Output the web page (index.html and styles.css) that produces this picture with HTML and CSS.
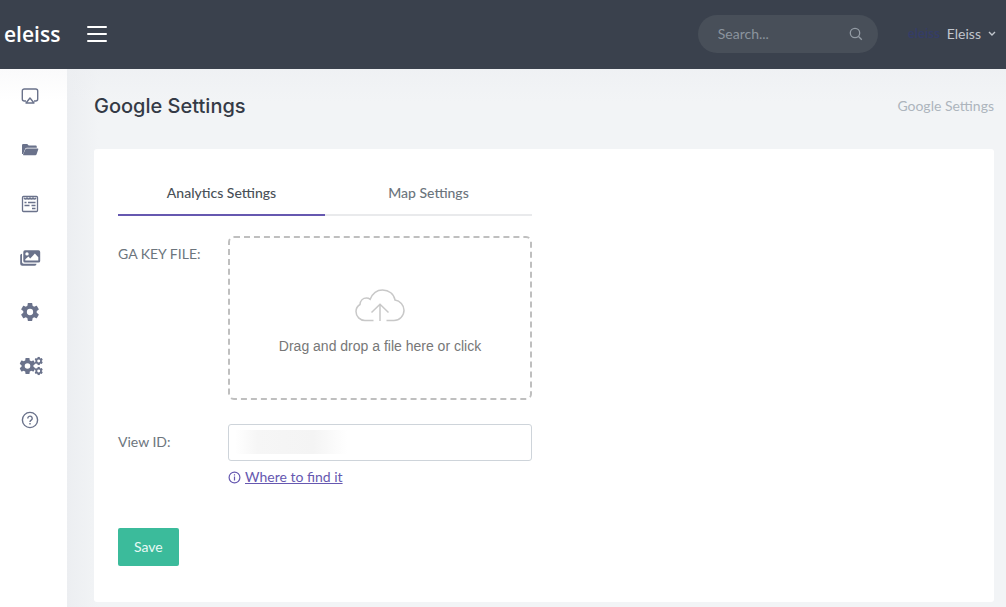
FILE: index.html
```html
<!DOCTYPE html>
<html lang="en">
<head>
<meta charset="utf-8">
<meta name="viewport" content="width=device-width, initial-scale=1">
<title>Google Settings</title>
<link rel="stylesheet" href="styles.css">
</head>
<body>
<svg class="defs" aria-hidden="true">
  <symbol id="cog" viewBox="2 2 20 20"><path d="M12,15.5A3.5,3.5 0 0,1 8.5,12A3.5,3.5 0 0,1 12,8.5A3.5,3.5 0 0,1 15.5,12A3.5,3.5 0 0,1 12,15.5M19.43,12.97C19.47,12.65 19.5,12.33 19.5,12C19.5,11.67 19.47,11.34 19.43,11L21.54,9.37C21.73,9.22 21.78,8.95 21.66,8.73L19.66,5.27C19.54,5.05 19.27,4.96 19.05,5.05L16.56,6.05C16.04,5.66 15.5,5.32 14.87,5.07L14.5,2.42C14.46,2.18 14.25,2 14,2H10C9.75,2 9.54,2.18 9.5,2.42L9.13,5.07C8.5,5.32 7.96,5.66 7.44,6.05L4.95,5.05C4.73,4.96 4.46,5.05 4.34,5.27L2.34,8.73C2.21,8.95 2.27,9.22 2.46,9.37L4.57,11C4.53,11.34 4.5,11.67 4.5,12C4.5,12.33 4.53,12.65 4.57,12.97L2.46,14.63C2.27,14.78 2.21,15.05 2.34,15.27L4.34,18.73C4.46,18.95 4.73,19.03 4.95,18.95L7.44,17.94C7.96,18.34 8.5,18.68 9.13,18.93L9.5,21.58C9.54,21.82 9.75,22 10,22H14C14.25,22 14.46,21.82 14.5,21.58L14.87,18.93C15.5,18.67 16.04,18.34 16.56,17.94L19.05,18.95C19.27,19.03 19.54,18.95 19.66,18.73L21.66,15.27C21.78,15.05 21.73,14.78 21.54,14.63L19.43,12.97Z"/></symbol>
</svg>
<header class="topbar">
  <a class="logo" href="#">eleiss</a>
  <button class="menu-toggle" type="button" aria-label="Toggle menu"><span></span><span></span><span></span></button>
  <form class="search" role="search">
    <input type="text" placeholder="Search..." aria-label="Search">
    <button type="button" aria-label="Submit search">
      <svg width="14" height="14" viewBox="0 0 14 14" fill="none" stroke="currentColor" stroke-width="1.3"><circle cx="6" cy="6" r="4.7"/><path d="M9.5 9.5l3.3 3.3"/></svg>
    </button>
  </form>
  <button class="account" type="button">
    <span class="avatar" aria-hidden="true">eleiss</span>
    <span>Eleiss</span>
    <svg width="8" height="6" viewBox="0 0 8 6" fill="none" stroke="currentColor" stroke-width="1.4"><path d="M1 1l3 3 3-3"/></svg>
  </button>
</header>
<div class="shell">
  <nav class="sidebar" aria-label="Main">
    <a href="#" aria-label="Dashboard"><svg viewBox="0 0 24 20" fill="none" stroke="currentColor" stroke-width="1.4" stroke-linejoin="round"><path d="M7 15H5.3a2 2 0 0 1-2-2V5a2 2 0 0 1 2-2h11.4a2 2 0 0 1 2 2v8a2 2 0 0 1-2 2H15M11 12l4 5H7z"/></svg></a>
    <a href="#" aria-label="Files"><svg viewBox="0 0 24 20" fill="currentColor"><path d="M3 14V5.200q0-1.200 1.200-1.200h4l1.500 1.500h7q1.100 0 1.100 1.200v1H8Q6.700 7.700 6.200 8.700L4.200 14z"/><path d="M7.700 8.500h11.100q.7 0 .5.700l-1.700 5.100q-.3 1-1.300 1H4.500q-.7 0-.4-.8l2.200-5.100q.4-.9 1.400-.9z"/></svg></a>
    <a href="#" aria-label="Articles"><svg viewBox="0 0 24 20" fill="none" stroke="currentColor" stroke-width="1.3"><rect x="3.500" y="2.500" width="15" height="15" rx="1"/><path d="M5 4q1.500 2 3 0 1.500 2 3 0 1.500 2 3 0 1.500 2 3 0M5.500 8.500h2M9 8.500h7.500M5.500 11.500h5M12.500 11.500h4M13 14.500h3.500"/></svg></a>
    <a href="#" aria-label="Gallery"><svg viewBox="0 0 24 20" fill="currentColor"><path d="M1.200 7.500Q1.200 5.700 3 5.700V14q0 1.800 1.800 1.800H17.500q0 2-1.800 2H3.200q-2 0-2-2z"/><path fill-rule="evenodd" d="M6 2.200h13.500q1.700 0 1.700 1.700v9q0 1.700-1.700 1.700H6q-1.700 0-1.700-1.700v-9Q4.300 2.200 6 2.200zM8 4.200a1.700 1.700 0 1 0 0 3.400 1.700 1.700 0 0 0 0-3.400zM6.300 12.500h13V9.300l-3.400-3.700-4.700 4.800-1.800-1.800-3.100 2.700z"/></svg></a>
    <a href="#" aria-label="Settings"><svg viewBox="0 0 24 20" fill="currentColor"><use href="#cog" x="2" y="1" width="18" height="18"/></svg></a>
    <a href="#" aria-label="Advanced settings"><svg viewBox="0 0 24 20" fill="currentColor"><use href="#cog" x="0.500" y="2" width="16" height="16"/><use href="#cog" x="15.500" y="0.800" width="8.400" height="8.400"/><use href="#cog" x="15.500" y="10.800" width="8.400" height="8.400"/></svg></a>
    <a href="#" aria-label="Help"><svg viewBox="0 0 24 20" fill="none" stroke="currentColor" stroke-width="1.400"><circle cx="11" cy="10" r="7.600"/><path d="M8.800 8.400a2.200 2.200 0 1 1 3.400 1.800q-1.200.8-1.200 1.700M11 13v1.400"/></svg></a>
  </nav>
  <main class="content">
    <div class="page-head">
      <h1>Google Settings</h1>
      <span class="crumb">Google Settings</span>
    </div>
    <section class="card">
      <div class="panel">
        <div class="tabs" role="tablist">
          <button class="tab active" type="button" role="tab" aria-selected="true">Analytics Settings</button>
          <button class="tab" type="button" role="tab" aria-selected="false">Map Settings</button>
        </div>
        <form>
          <div class="field">
            <label for="keyfile">GA KEY FILE:</label>
            <div class="dropzone">
              <svg width="50" height="34" viewBox="0 0 50 34" fill="none" stroke="currentColor" stroke-width="1.500"><path d="M18.500 31.500H10C5 31.500 1 27.500 1 22.500c0-3 1.500-5.500 4-7 .3-4 3-6.500 6.500-6.500 1.500 0 2.500.4 3.700 1.300C17.500 4.500 22 1 27.500 1c6.500 0 11.500 4 12.500 10 5 .7 9 5 9 10.200 0 5.700-4.500 10.300-10 10.300h-7.500M25 32V15.500M16.500 23.500l8.500-8.300 8.500 8.300"/></svg>
              <p>Drag and drop a file here or click</p>
              <input id="keyfile" type="file">
            </div>
          </div>
          <div class="field">
            <label for="viewid">View ID:</label>
            <div>
              <input id="viewid" class="text-input" type="text">
              <div class="hint">
                <svg width="13" height="13" viewBox="0 0 13 13" fill="none" stroke="currentColor" stroke-width="1.200"><circle cx="6.500" cy="6.500" r="5.400"/><path d="M6.500 5.500v4M6.500 3.300v1.300"/></svg>
                <a href="#">Where to find it</a>
              </div>
            </div>
          </div>
          <button class="save" type="submit">Save</button>
        </form>
      </div>
    </section>
  </main>
</div>
</body>
</html>
```
FILE: styles.css
```css
* {
  box-sizing: border-box;
}

body {
  margin: 0;
  min-height: 100vh;
  display: flex;
  flex-direction: column;
  background: #f2f4f7;
  color: #6c757d;
  font: 14px/20px Lato, "Open Sans", sans-serif;
}

button,
input {
  font: inherit;
}

button {
  border: 0;
  background: none;
  padding: 0;
  color: inherit;
  cursor: pointer;
}

.defs {
  display: none;
}

.topbar {
  display: flex;
  align-items: center;
  height: 69px;
  padding: 0 10px 2px 4px;
  background: #3a414d;
}

.logo {
  width: 83px;
  color: #fff;
  font: 600 21px/28px "Open Sans", sans-serif;
  text-decoration: none;
}

.menu-toggle {
  display: grid;
  gap: 5px;
  width: 20px;
}

.menu-toggle span {
  height: 2px;
  border-radius: 1px;
  background: #fff;
}

.search {
  display: flex;
  align-items: center;
  width: 180px;
  height: 38px;
  margin-left: auto;
  padding: 0 15px 0 20px;
  border-radius: 19px;
  background: #484f59;
  color: #939ba4;
}

.search input {
  flex: 1;
  min-width: 0;
  padding: 0;
  border: 0;
  outline: 0;
  background: none;
  color: #fff;
}

.search input::placeholder {
  color: #8b949e;
}

.search svg,
.account svg {
  display: block;
}

.account {
  display: flex;
  align-items: center;
  gap: 7px;
  margin-left: 30px;
  color: #c1c6cd;
}

.avatar {
  width: 32px;
  color: #343c68;
  font: 600 12px/32px "Open Sans", sans-serif;
}

.shell {
  flex: 1;
  display: flex;
}

.sidebar {
  flex: none;
  width: 67px;
  background: linear-gradient(#fafafb, #fff 32px);
}

.sidebar a {
  display: flex;
  align-items: center;
  height: 54px;
  padding-left: 19px;
  color: #6a728b;
}

.sidebar svg {
  width: 24px;
  height: 20px;
}

.content {
  flex: 1;
  min-width: 0;
  padding: 0 12px 5px 27px;
  background:
    linear-gradient(#eceef180, #eceef100 32px),
    linear-gradient(90deg, #eceef1, #f2f4f6 32px);
}

.page-head {
  display: flex;
  align-items: center;
  justify-content: space-between;
  height: 80px;
  padding-bottom: 6px;
}

h1 {
  margin: 0;
  color: #343a46;
  font: 500 20px/28px Inter, sans-serif;
}

.crumb {
  color: #adb5bd;
}

.card {
  padding: 24px 24px 36px;
  border-radius: 3px;
  background: #fff;
}

.panel {
  width: calc(50% - 12px);
}

.tabs {
  display: grid;
  grid-template-columns: 1fr 1fr;
  margin-bottom: 20px;
}

.tab {
  height: 43px;
  padding-bottom: 2px;
  border-bottom: 2px solid #e9eaec;
  color: #6c757d;
  font-weight: 500;
}

.tab.active {
  border-color: #6658b0;
  color: #495057;
}

.field {
  display: grid;
  grid-template-columns: 110px 1fr;
  margin-bottom: 24px;
}

.field label {
  padding-top: 8px;
}

.dropzone {
  position: relative;
  display: flex;
  flex-direction: column;
  align-items: center;
  justify-content: center;
  height: 164px;
  padding-top: 8px;
  border: 2px dashed #bfbfbf;
  border-radius: 6px;
  color: #c8c8c8;
}

.dropzone p {
  margin: 13px 0 0;
  color: #777;
  font: 14px/20px "Liberation Sans", Arial, sans-serif;
}

.dropzone input {
  position: absolute;
  inset: 0;
  width: 100%;
  height: 100%;
  opacity: 0;
}

.text-input {
  display: block;
  width: 100%;
  height: 37px;
  padding: 0 12px;
  border: 1px solid #ced4da;
  border-radius: 3px;
  background: linear-gradient(90deg, #fff, #f6f6f6 20%, #f4f4f4 70%, #fff) 6px 5px / 112px 24px no-repeat #fff;
}

.hint {
  display: flex;
  align-items: center;
  gap: 4px;
  margin-top: 6px;
  color: #6658b0;
}

.hint a {
  color: inherit;
}

.save {
  height: 38px;
  margin-top: 17px;
  padding: 0 16px;
  border-radius: 2px;
  background: #3bbb9b;
  color: #e9f9f5;
}
```
